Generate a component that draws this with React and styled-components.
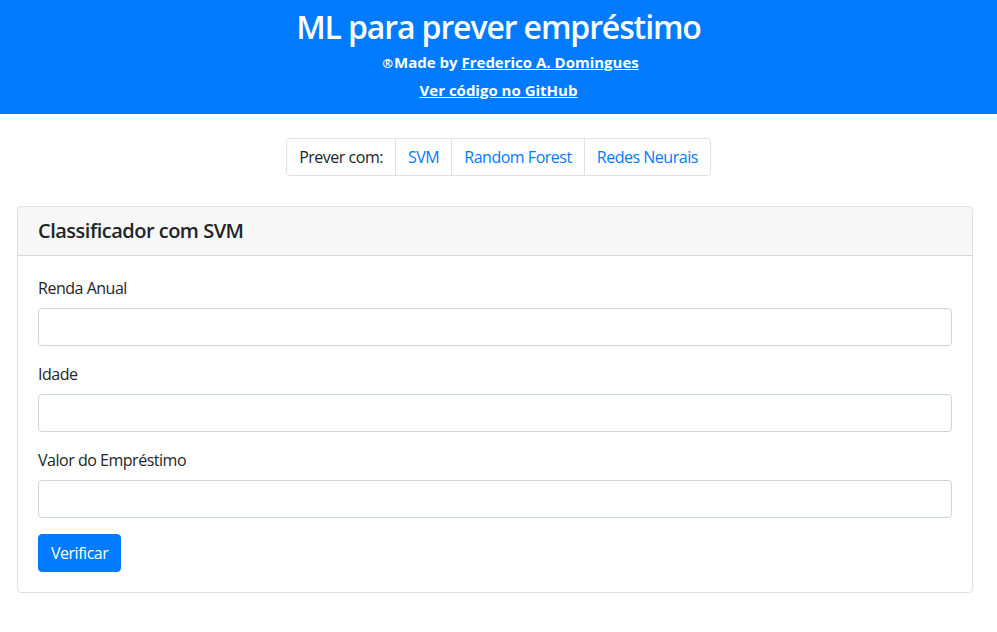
import styled, { createGlobalStyle } from "styled-components";

const GlobalStyle = createGlobalStyle`
  * { box-sizing: border-box; }
  body {
    margin: 0;
    font-family: "Open Sans", "Noto Sans", sans-serif;
    font-size: 16px;
    line-height: 1.5;
    letter-spacing: -0.03em;
    color: #212529;
    background: #fff;
  }
`;

const fields = ["Renda Anual", "Idade", "Valor do Empréstimo"];
const models = ["SVM", "Random Forest", "Redes Neurais"];

export default function App() {
  return (
    <>
      <GlobalStyle />
      <Header>
        <Title>ML para prever empréstimo</Title>
        <Credit shift>
          <Reg>®</Reg>Made by <a href="#">Frederico A. Domingues</a>
        </Credit>
        <Credit>
          <a href="#">Ver código no GitHub</a>
        </Credit>
      </Header>

      <NavWrap>
        <ModelNav>
          <NavItem>Prever com:</NavItem>
          {models.map((m) => (
            <NavItem key={m} link>
              {m}
            </NavItem>
          ))}
        </ModelNav>
      </NavWrap>

      <Card>
        <CardHeader>Classificador com SVM</CardHeader>
        <CardBody>
          {fields.map((f) => (
            <FormGroup key={f}>
              <Label>{f}</Label>
              <Input type="text" />
            </FormGroup>
          ))}
          <Button>Verificar</Button>
        </CardBody>
      </Card>
    </>
  );
}

const Header = styled.header`
  background: #007bff;
  color: #fff;
  height: 114px;
  padding-top: 7px;
  display: flex;
  flex-direction: column;
  align-items: center;
`;

const Title = styled.h1`
  margin: 0 0 2px;
  font-size: 32px;
  font-weight: 600;
  line-height: 40px;
  letter-spacing: -0.035em;
`;

const Credit = styled.p`
  margin: 0;
  padding-left: ${(p) => (p.shift ? "24px" : "0")};
  font-size: 15px;
  font-weight: 700;
  line-height: 27px;
  letter-spacing: 0;
  a {
    color: #fff;
    text-decoration: underline;
  }
`;

const Reg = styled.span`
  font-size: 13px;
  margin-right: 1px;
`;

const NavWrap = styled.div`
  display: flex;
  justify-content: center;
  margin-top: 24px;
`;

const ModelNav = styled.nav`
  display: flex;
  border: 1px solid #dee2e6;
  border-radius: 4px;
`;

const NavItem = styled.a`
  padding: 6px 12px;
  line-height: 24px;
  color: ${(p) => (p.link ? "#007bff" : "#212529")};
  text-decoration: none;
  & + & {
    border-left: 1px solid #dee2e6;
  }
`;

const Card = styled.section`
  margin: 30px 0 0 17px;
  width: 956px;
  border: 1px solid rgba(0, 0, 0, 0.125);
  border-radius: 4px;
  overflow: hidden;
`;

const CardHeader = styled.h5`
  margin: 0;
  padding: 12px 20px;
  background: rgba(0, 0, 0, 0.03);
  border-bottom: 1px solid rgba(0, 0, 0, 0.125);
  font-size: 20px;
  font-weight: 600;
  line-height: 24px;
  letter-spacing: -0.025em;
`;

const CardBody = styled.div`
  padding: 20px;
`;

const FormGroup = styled.div`
  margin-bottom: 16px;
`;

const Label = styled.label`
  display: block;
  margin-bottom: 8px;
  line-height: 24px;
`;

const Input = styled.input`
  display: block;
  width: 100%;
  height: 38px;
  padding: 6px 12px;
  font: inherit;
  letter-spacing: inherit;
  border: 1px solid #ced4da;
  border-radius: 4px;
`;

const Button = styled.button`
  height: 38px;
  padding: 6px 12px;
  font: inherit;
  letter-spacing: inherit;
  line-height: 24px;
  color: #fff;
  background: #007bff;
  border: 1px solid #007bff;
  border-radius: 4px;
`;
